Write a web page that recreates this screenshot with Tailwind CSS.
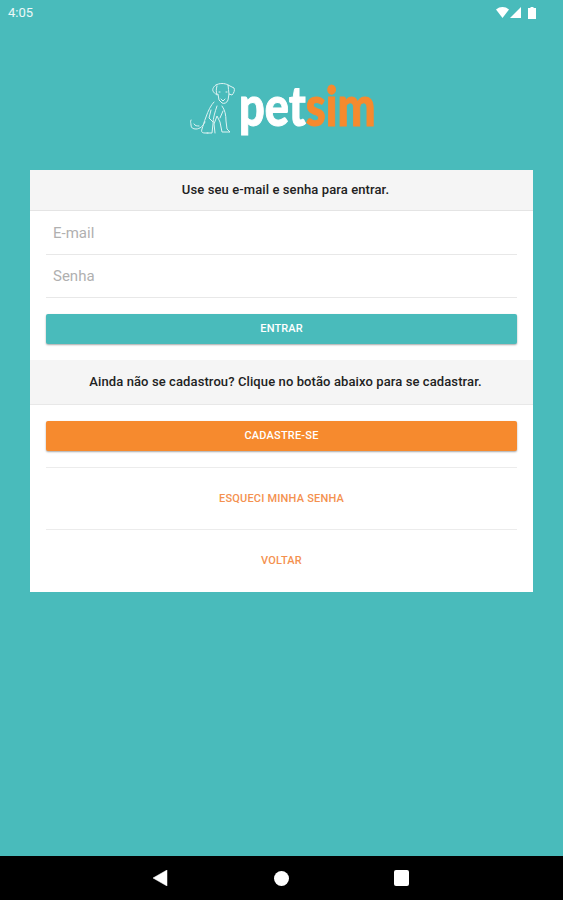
<!DOCTYPE html>
<html lang="pt-BR">
<head>
    <meta charset="UTF-8">
    <meta name="viewport" content="width=device-width, initial-scale=1.0">
    <title>PetSim</title>
    <script src="https://cdn.jsdelivr.net/npm/@tailwindcss/browser@4"></script>
</head>
<body class="bg-[#49bbbb] font-['Roboto',sans-serif]">
    <div class="h-[900px] flex flex-col overflow-hidden">
        <!-- status bar -->
        <div class="h-[25px] flex items-center justify-between pl-[8px] pr-[27px] text-white">
            <span class="text-[13px] leading-none text-white/90">4:05</span>
            <div class="flex items-center gap-[1px]">
                <svg width="13" height="11" viewBox="0 0 13 11"><path d="M0 2.5C2 .8 4.2 0 6.5 0S11 .8 13 2.5L6.5 11z" fill="#fff"/></svg>
                <svg width="11" height="11" viewBox="0 0 11 11"><path d="M11 0v11H0z" fill="#fff"/></svg>
                <svg class="ml-[6px]" width="8" height="12" viewBox="0 0 8 12"><path d="M2.5 0h3v1H8v11H0V1h2.5z" fill="#fff"/></svg>
            </div>
        </div>

        <!-- logo -->
        <div class="h-[145px] flex items-start justify-center pt-[57px]">
            <div class="flex items-start w-[183px]">
                <svg class="shrink-0" width="50" height="54" viewBox="0 0 50 54" fill="none" stroke="#dff3f3" stroke-width="1" stroke-linecap="round" stroke-linejoin="round">
                    <path d="M26 3c3-2 9-2 12 0l6 3c1 2 0 5-2 7l-3-1-1 6c-1 3-4 4-6 3l-3-3-1-6c-2 1-4-1-5-3-1-2 1-5 3-6z"/>
                    <path d="M27 4c-1 3-1 6 0 9M38 3c0 3 1 6 1 9M31 17l2 2 2-2M29 10h1M36 10h1"/>
                    <path d="M24 20c-3 3-6 9-8 15-2 5-3 9-4 12-1 3 0 4 3 4h3M27 24c-2 6-4 12-4 18l-1 9h-5"/>
                    <path d="M32 24c3 4 4 9 4 15l1 8 3 3h-8l-2-10-3-6-3 8 1 9"/>
                    <path d="M15 40c-2 4-5 7-9 7-3 0-5-1-5-4 0-2-1-3 0-5M4 42c1 2 3 2 5 2"/>
                    <path d="M21 28l-2 8 4 4M33 29l-3 7"/>
                </svg>
                <div class="ml-[-1px] mt-[-7px] w-[134px] whitespace-nowrap origin-left scale-x-[0.82] text-[55px] leading-[60px] font-black font-['Lato',sans-serif] text-white [-webkit-text-stroke:1px_currentColor]">pet<span class="text-[#f68a2e]">sim</span></div>
            </div>
        </div>

        <!-- card -->
        <div class="mx-[30px] bg-white flex flex-col h-[422px]">
            <div class="h-[41px] pl-[8px] bg-[#f5f5f5] border-b border-[#e4e4e4] flex items-center justify-center text-[13px] tracking-[0.1px] font-medium text-[#222]">Use seu e-mail e senha para entrar.</div>
            <div class="px-[16px]">
                <input class="w-full h-[44px] border-b border-[#e8e8e8] px-[7px] text-[15px] outline-none placeholder:text-[#b0b0b0]" type="text" placeholder="E-mail">
                <input class="w-full h-[43px] border-b border-[#e8e8e8] px-[7px] text-[15px] outline-none placeholder:text-[#b0b0b0]" type="password" placeholder="Senha">
                <button class="mt-[16px] w-full h-[30px] rounded-[2px] bg-[#49bbbb] text-white text-[11px] tracking-[0.1px] font-medium shadow-[0_1px_2px_rgba(0,0,0,0.35)]">ENTRAR</button>
            </div>
            <div class="mt-[16px] h-[45px] pl-[8px] bg-[#f5f5f5] border-b border-[#e8e8e8] flex items-center justify-center text-[13px] tracking-[0.1px] font-medium text-[#222]">Ainda não se cadastrou? Clique no botão abaixo para se cadastrar.</div>
            <div class="px-[16px] flex-1 flex flex-col">
                <button class="mt-[16px] w-full h-[30px] rounded-[2px] bg-[#f68a2e] text-white text-[11px] tracking-[0.2px] font-medium shadow-[0_1px_2px_rgba(0,0,0,0.35)]">CADASTRE-SE</button>
                <div class="mt-[16px] h-[63px] pt-[1px] border-t border-b border-[#ececec] flex items-center justify-center text-[11px] tracking-[0.2px] font-medium text-[#f4914f]">ESQUECI MINHA SENHA</div>
                <div class="flex-1 pt-[1px] flex items-center justify-center text-[11px] tracking-[0.2px] font-medium text-[#f4914f]">VOLTAR</div>
            </div>
        </div>

        <div class="flex-1"></div>

        <!-- nav bar -->
        <div class="h-[44px] bg-black relative flex items-center justify-center">
            <svg class="absolute left-[153px] top-[14px]" width="15" height="16" viewBox="0 0 15 16"><path d="M14 0v16L0 8z" fill="#fff" stroke="#fff" stroke-width="0.5" stroke-linejoin="round"/></svg>
            <div class="absolute left-[274px] top-[15px] w-[15px] h-[15px] rounded-full bg-white"></div>
            <div class="absolute left-[394px] top-[14px] w-[15px] h-[16px] rounded-[2px] bg-white"></div>
        </div>
    </div>
</body>
</html>
